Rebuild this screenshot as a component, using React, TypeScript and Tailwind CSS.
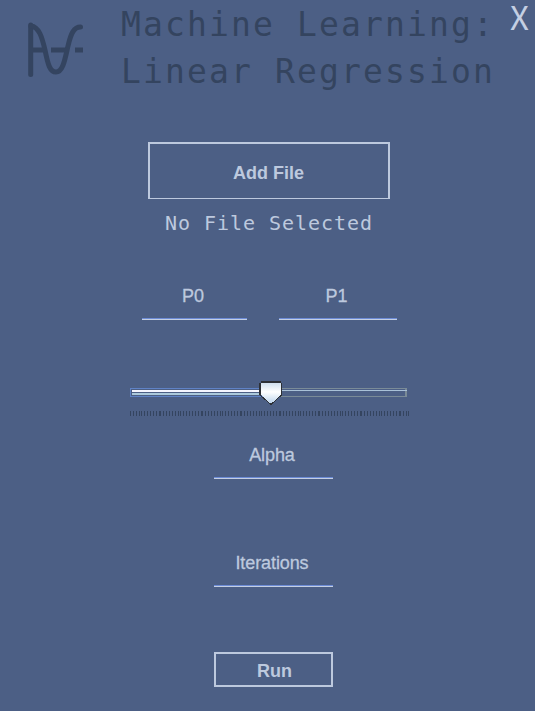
import React from 'react';

const tickRuns = [
  [0, 9], [11, 29], [30, 48], [50, 71], [72, 90], [92, 110], [111, 129], [131, 149],
  [150, 168], [170, 188], [189, 210], [212, 230], [231, 249], [251, 269], [270, 276], [278, 278],
];

const tickOffsets = tickRuns.flatMap(([start, end]) =>
  Array.from({ length: (end - start) / 3 + 1 }, (_, i) => start + i * 3),
);

function Title() {
  return (
    <header className="flex h-[142px] items-start">
      <svg className="ml-[20px] mt-[15px] shrink-0" width="70" height="70" viewBox="20 15 70 70" fill="none" stroke="#344460" strokeWidth="5">
        <path d="M30.700 25V74.500" strokeLinecap="round" />
        <path d="M31 26C39 27 42 37 45 50C48 65 50 72 56 72C63 72 65 59 68 46C71 33 74 27 80.500 27" strokeLinecap="round" />
        <path d="M31 50H43M51 50H67M75 50H83" />
      </svg>
      <h1 className="ml-[31px] mt-[1px] w-[380px] shrink-0 whitespace-pre font-['DejaVu_Sans_Mono',monospace] text-[33px] leading-[47px] tracking-[2.13px] text-[#34445f]">
        {'Machine Learning:\nLinear Regression'}
      </h1>
      <button className="ml-[9px] h-[32px] w-[20px] shrink-0 text-left font-['Noto_Sans_CJK_SC',sans-serif] text-[33px] leading-[32px] text-[#c4cfe3]">X</button>
    </header>
  );
}

function Field({ label, className }: { label: string; className: string }) {
  return (
    <div className={`flex h-[36px] flex-col items-center justify-between ${className}`}>
      <span className="mr-[3px] font-['Liberation_Sans',sans-serif] text-[18px] leading-[24px] tracking-[-0.1px] text-[#bdc9de] [-webkit-text-stroke:0.3px_#bdc9de]">{label}</span>
      <div className="h-[2px] w-full border-b border-[#c4cfe3] bg-[#6c8bd6]" />
    </div>
  );
}

function Slider() {
  return (
    <svg className="ml-[129px] mt-[59px] block" width="282" height="38" viewBox="129 379 282 38" shapeRendering="crispEdges">
      <defs>
        <linearGradient id="thumb" x1="0" y1="0" x2="0" y2="1">
          <stop offset="0" stopColor="#cbdcec" />
          <stop offset=".45" stopColor="#ffffff" />
          <stop offset="1" stopColor="#b9d2ec" />
        </linearGradient>
      </defs>
      <rect x="130.500" y="388.500" width="276" height="8" fill="none" stroke="#7a8b98" />
      <path d="M405.500 389V396" stroke="#7a8b98" />
      <path d="M131 390.500H407" stroke="#a9c1d8" />
      <rect x="130.500" y="388.500" width="135" height="8" fill="#4c5f85" stroke="#5f82c5" />
      <path d="M132 391H265" stroke="#f5f6ff" strokeWidth="2" />
      <path d="M132 394H265" stroke="#abc9dc" strokeWidth="2" />
      <path d="M261 382H281V395L271 404L261 395Z" fill="url(#thumb)" />
      <path d="M281.500 383V395L271 404.500L260 395" fill="none" stroke="#2d3036" />
      <path d="M261 382H281" stroke="#2d3036" strokeWidth="2" />
      <path d="M260 383V395" stroke="#2d3036" strokeWidth="2" />
      {tickOffsets.map((x) => <rect key={x} x={130 + x} y="411" width="1" height="5" fill="#34445f" />)}
    </svg>
  );
}

export default function App() {
  return (
    <main className="flex h-[711px] w-[535px] flex-col bg-[#4c5f85]">
      <Title />
      <button className="ml-[148px] h-[57px] w-[242px] shrink-0 border-2 border-b border-[#bdc9de] pr-[1px] pt-[5px] font-['Liberation_Sans',sans-serif] text-[18px] font-bold text-[#bdc9de]">Add File</button>
      <p className="ml-[165px] mt-[8px] whitespace-pre font-['DejaVu_Sans_Mono',monospace] text-[20px] font-light leading-[32px] tracking-[0.960px] text-[#bdc9de]">No File Selected</p>
      <div className="ml-[142px] mt-[45px] flex gap-[32px]">
        <Field label="P0" className="w-[105px]" />
        <Field label="P1" className="w-[118px]" />
      </div>
      <Slider />
      <Field label="Alpha" className="ml-[214px] mt-[26px] w-[119px]" />
      <Field label="Iterations" className="ml-[214px] mt-[72px] w-[119px]" />
      <button className="ml-[214px] mt-[65px] h-[35px] w-[119px] shrink-0 border-2 border-[#bdc9de] pl-[2px] pt-[3px] font-['Liberation_Sans',sans-serif] text-[18px] font-bold text-[#bdc9de]">Run</button>
    </main>
  );
}
